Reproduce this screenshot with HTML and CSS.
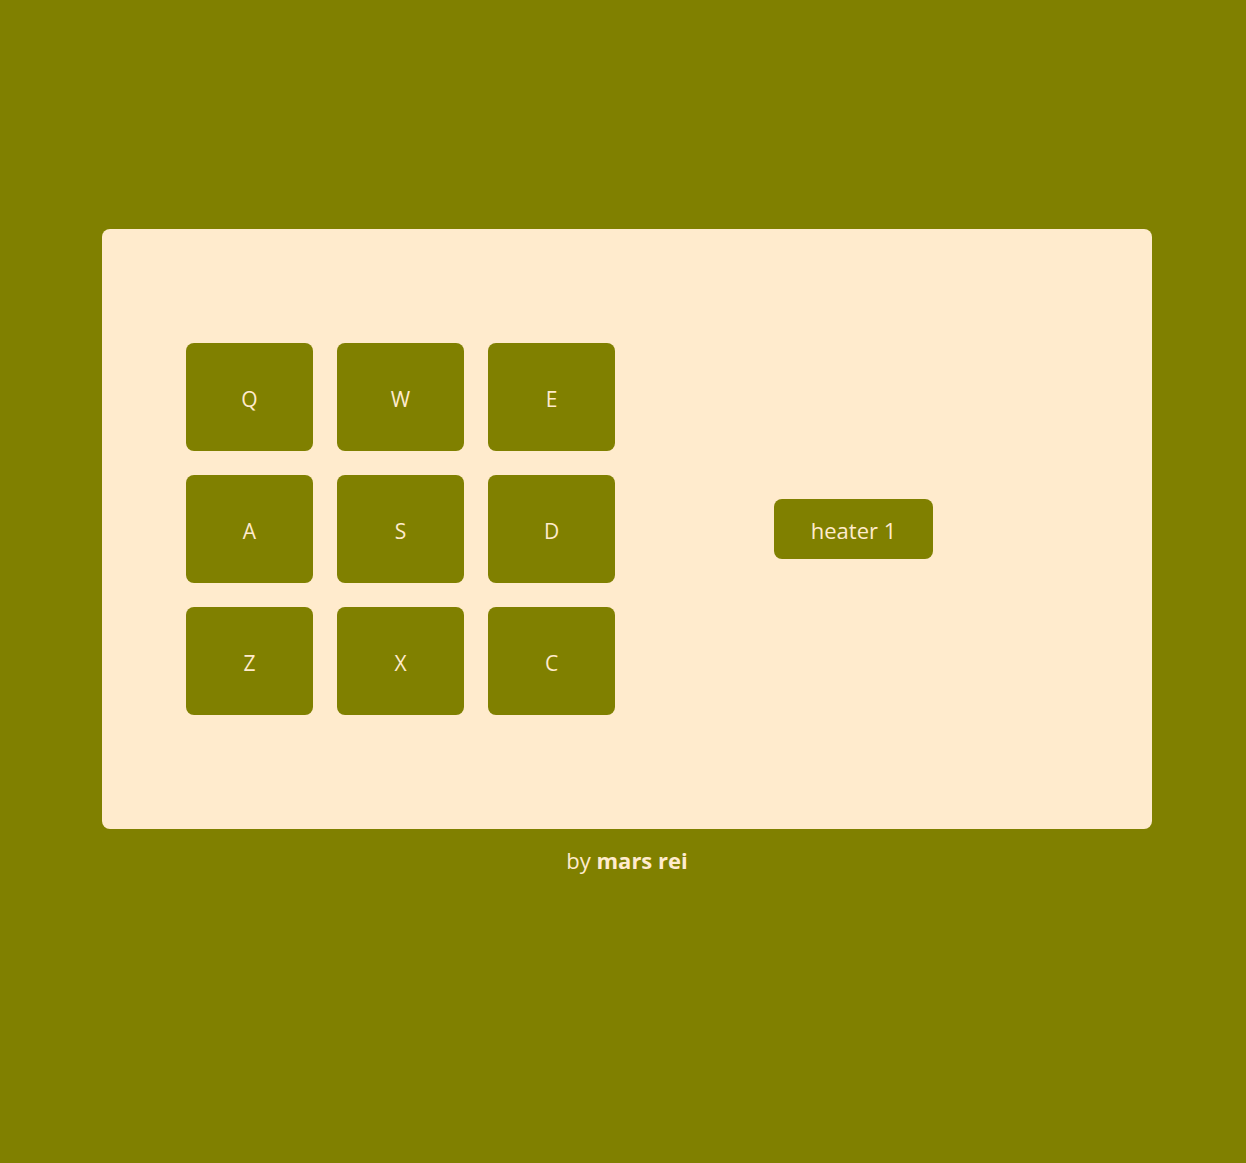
FILE: index.html
```html
<!DOCTYPE html>
<html>
<head>
<meta charset="utf-8">
<link rel="stylesheet" href="styles.css">
</head>
<body>
<main class="page">
  <div class="machine">
    <div class="pads">
      <div class="pad">Q</div>
      <div class="pad">W</div>
      <div class="pad">E</div>
      <div class="pad">A</div>
      <div class="pad">S</div>
      <div class="pad">D</div>
      <div class="pad">Z</div>
      <div class="pad">X</div>
      <div class="pad">C</div>
    </div>
    <div class="display">heater 1</div>
  </div>
  <footer class="credit">by <strong>mars rei</strong></footer>
</main>
</body>
</html>
```
FILE: styles.css
```css
html, body {
  margin: 0;
  background: #808000;
}
body {
  padding-left: 8px;
  font-family: "Open Sans", "Noto Sans", sans-serif;
  color: #ffebcd;
}
.page {
  height: 100vh;
  display: flex;
  flex-direction: column;
  align-items: center;
  justify-content: center;
}
.machine {
  width: 1050px;
  height: 600px;
  box-sizing: border-box;
  background: #ffebcd;
  border-radius: 8px;
  display: flex;
  align-items: center;
  padding-left: 84px;
  gap: 159px;
}
.pads {
  display: grid;
  grid-template-columns: repeat(3, 127px);
  grid-auto-rows: 108px;
  gap: 24px;
}
.pad {
  background: #808000;
  border-radius: 8px;
  display: flex;
  align-items: center;
  justify-content: center;
  font-size: 21px;
  padding-top: 4px;
  box-sizing: border-box;
}
.display {
  width: 159px;
  height: 60px;
  background: #808000;
  border-radius: 8px;
  display: flex;
  align-items: center;
  justify-content: center;
  font-size: 22px;
  box-sizing: border-box;
  padding-top: 1px;
}
.credit {
  height: 105px;
  padding-top: 13px;
  box-sizing: border-box;
  font-size: 22px;
  line-height: 36px;
}
.credit strong {
  font-weight: 700;
}
```
